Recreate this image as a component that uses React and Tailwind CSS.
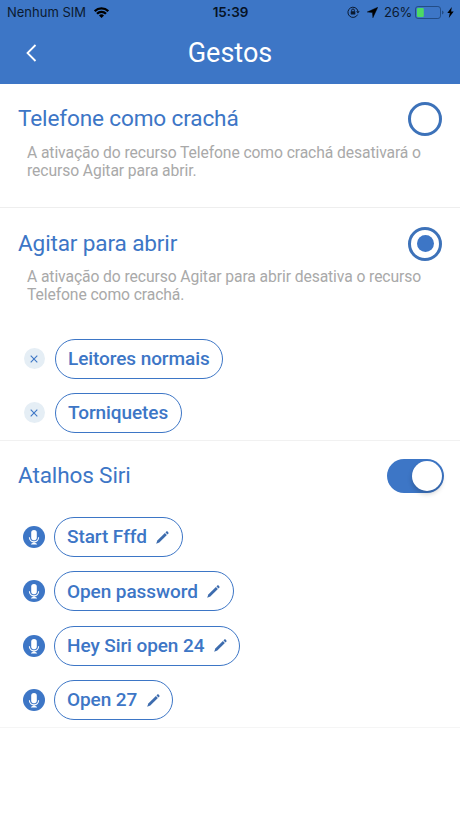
const shortcuts = ["Start Fffd", "Open password", "Hey Siri open 24", "Open 27"];
const readers = ["Leitores normais", "Torniquetes"];

const StatusBar = () => (
  <div className="grid grid-cols-[1fr_auto_1fr] items-center h-6 pl-[7px] pr-[6px] text-[#0b1a30] font-['Inter',sans-serif] text-[13px] leading-6">
    <div className="flex items-center">
      <span className="w-[80px] whitespace-nowrap">Nenhum SIM</span>
      <svg className="ml-[7px]" width="15" height="11" viewBox="0 0 15 11" fill="none" stroke="#000" strokeWidth="2.3">
        <path d="M.7 4.1a9.7 9.7 0 0 1 13.6 0" />
        <path d="M3 6.8a6.3 6.3 0 0 1 9 0" />
        <path d="M7.5 11 5 8.6a3.5 3.5 0 0 1 5 0z" fill="#000" stroke="none" />
      </svg>
    </div>
    <span className="font-semibold text-[13.5px] text-[#061225]">15:39</span>
    <div className="flex items-center justify-end">
      <svg width="13" height="12" viewBox="0 0 13 12" fill="none" stroke="#0b1a30">
        <path d="M10.6 8.6A5.1 5.1 0 1 1 11 5.2" />
        <path d="M9.1 5.2h3.6l-1.8 2.4z" fill="#0b1a30" stroke="none" />
        <rect x="3.7" y="5.2" width="4.6" height="3.4" rx=".5" fill="#0b1a30" stroke="none" />
        <path d="M4.6 5.5V4.4a1.4 1.4 0 0 1 2.8 0v1.1" />
      </svg>
      <svg className="ml-[7px]" width="11" height="11" viewBox="0 0 11 11">
        <path d="M10.8.2.2 5l5.2.6.5 5.2z" fill="#000" stroke="#000" strokeWidth=".4" />
      </svg>
      <span className="ml-[6px] w-[27px] whitespace-nowrap tracking-[-0.3px]">26%</span>
      <svg className="ml-[4px]" width="29" height="13" viewBox="0 0 29 13">
        <rect x=".5" y=".5" width="25" height="12" rx="2.6" fill="none" stroke="#234d86" />
        <rect x="2" y="2" width="6.8" height="9" rx="1" fill="#4cd964" />
        <path d="M27 4.5q1.6.6 1.6 2T27 8.5z" fill="#234d86" />
      </svg>
      <svg className="ml-[3px]" width="7" height="11" viewBox="0 0 7 11">
        <path d="M4.8 0 .3 6h2.5l-1 5L6.7 4.6H4.1z" fill="#000" />
      </svg>
    </div>
  </div>
);

const Header = () => (
  <header className="h-[83.5px] bg-[#3d76c6]">
    <StatusBar />
    <div className="grid grid-cols-[1fr_auto_1fr] items-center h-[58px] pl-[26px] pr-[26px]">
      <svg width="11" height="18" viewBox="0 0 11 18" fill="none" stroke="#fff" strokeWidth="1.8">
        <path d="M9.5 1 1.5 9l8 8" />
      </svg>
      <h1 className="text-[27px] leading-8 text-white">Gestos</h1>
    </div>
  </header>
);

const Radio = ({ checked }) => (
  <span className="flex items-center justify-center size-[34px] rounded-full border-[3.5px] border-[#3d72b9]">
    {checked && <span className="size-[17px] rounded-full bg-[#3d76c6]" />}
  </span>
);

const Option = ({ title, checked, children }) => (
  <>
    <div className="flex items-center justify-between pl-[18px] pr-[18px]">
      <h2 className="text-[22.6px] leading-8 tracking-[-0.15px] text-[#3d76c6]">{title}</h2>
      <Radio checked={checked} />
    </div>
    <p className="mt-[7.5px] pl-[27px] text-[15.7px] leading-[18px] tracking-[-0.1px] text-[#a9a9a9] whitespace-nowrap">
      {children}
    </p>
  </>
);

const Chip = ({ children }) => (
  <div className="flex items-center h-10 pt-px pl-[12.5px] pr-[12.5px] rounded-full border-[1.3px] border-[#3d76c6] text-[19px] font-medium tracking-[-0.08px] text-[#3d76c6] whitespace-nowrap">
    {children}
  </div>
);

const Pencil = () => (
  <svg className="ml-[9.5px] -mt-px" width="13" height="13" viewBox="0 0 13 13" fill="#3d6cae">
    <path d="M.2 12.8 1.3 9.5 8.9 2l2 2-7.6 7.6z" />
    <path d="m9.5 1.4.8-.8c.4-.4 1-.4 1.3 0l.8.8c.4.4.4.9 0 1.2l-.9.8z" />
  </svg>
);

const Mic = () => (
  <svg width="22" height="22" viewBox="0 0 22 22">
    <circle cx="11" cy="11" r="11" fill="#3d76c6" />
    <rect x="8.2" y="4" width="5.6" height="10.2" rx="2.8" fill="#fff" />
    <path d="M6.4 11.3a4.6 4.6 0 0 0 9.2 0M11 16v2" fill="none" stroke="#fff" strokeWidth="1.1" />
    <path d="M7.8 18.5q.4-1.8 3.2-1.8t3.2 1.8z" fill="#fff" />
  </svg>
);

const App = () => {
  return (
    <div className="w-full h-[818px] overflow-hidden bg-white font-['Roboto',sans-serif]">
      <Header />

      <section className="h-[124.5px] pt-[18.5px] border-b border-[#eeeeee]">
        <Option title="Telefone como crachá">
          A ativação do recurso Telefone como crachá desativará o
          <br />
          recurso Agitar para abrir.
        </Option>
      </section>

      <section className="h-[233px] pt-[18.5px] border-b border-[#f1f1f1]">
        <Option title="Agitar para abrir" checked>
          A ativação do recurso Agitar para abrir desativa o recurso
          <br />
          Telefone como crachá.
        </Option>
        <div className="mt-[34.5px] pl-[23.5px] flex flex-col gap-[14.4px]">
          {readers.map((name) => (
            <div key={name} className="flex items-center gap-[10px]">
              <span className="flex items-center justify-center size-[21px] rounded-full bg-[#e5eef5]">
                <svg width="8" height="8" viewBox="0 0 8 8" stroke="#3d76c6" strokeWidth="1.1">
                  <path d="m.7.7 6.6 6.6m0-6.6L.7 7.3" />
                </svg>
              </span>
              <Chip>{name}</Chip>
            </div>
          ))}
        </div>
      </section>

      <section className="h-[287px] pt-[18px] border-b border-[#f5f5f5]">
        <div className="flex items-center justify-between pl-[18px] pr-[16px]">
          <h2 className="text-[22.6px] leading-8 tracking-[-0.15px] text-[#3d76c6]">Atalhos Siri</h2>
          <span className="flex items-center justify-end w-[57px] h-[34px] pr-[2px] rounded-full bg-[#3d76c6]">
            <span className="size-[30px] rounded-full bg-white shadow-[0_3px_5px_rgba(0,0,0,0.2)]" />
          </span>
        </div>
        <div className="mt-[24px] pl-[22.5px] flex flex-col gap-[14.4px]">
          {shortcuts.map((phrase) => (
            <div key={phrase} className="flex items-center gap-[9px]">
              <Mic />
              <Chip>
                {phrase}
                <Pencil />
              </Chip>
            </div>
          ))}
        </div>
      </section>
    </div>
  );
};

export default App;
